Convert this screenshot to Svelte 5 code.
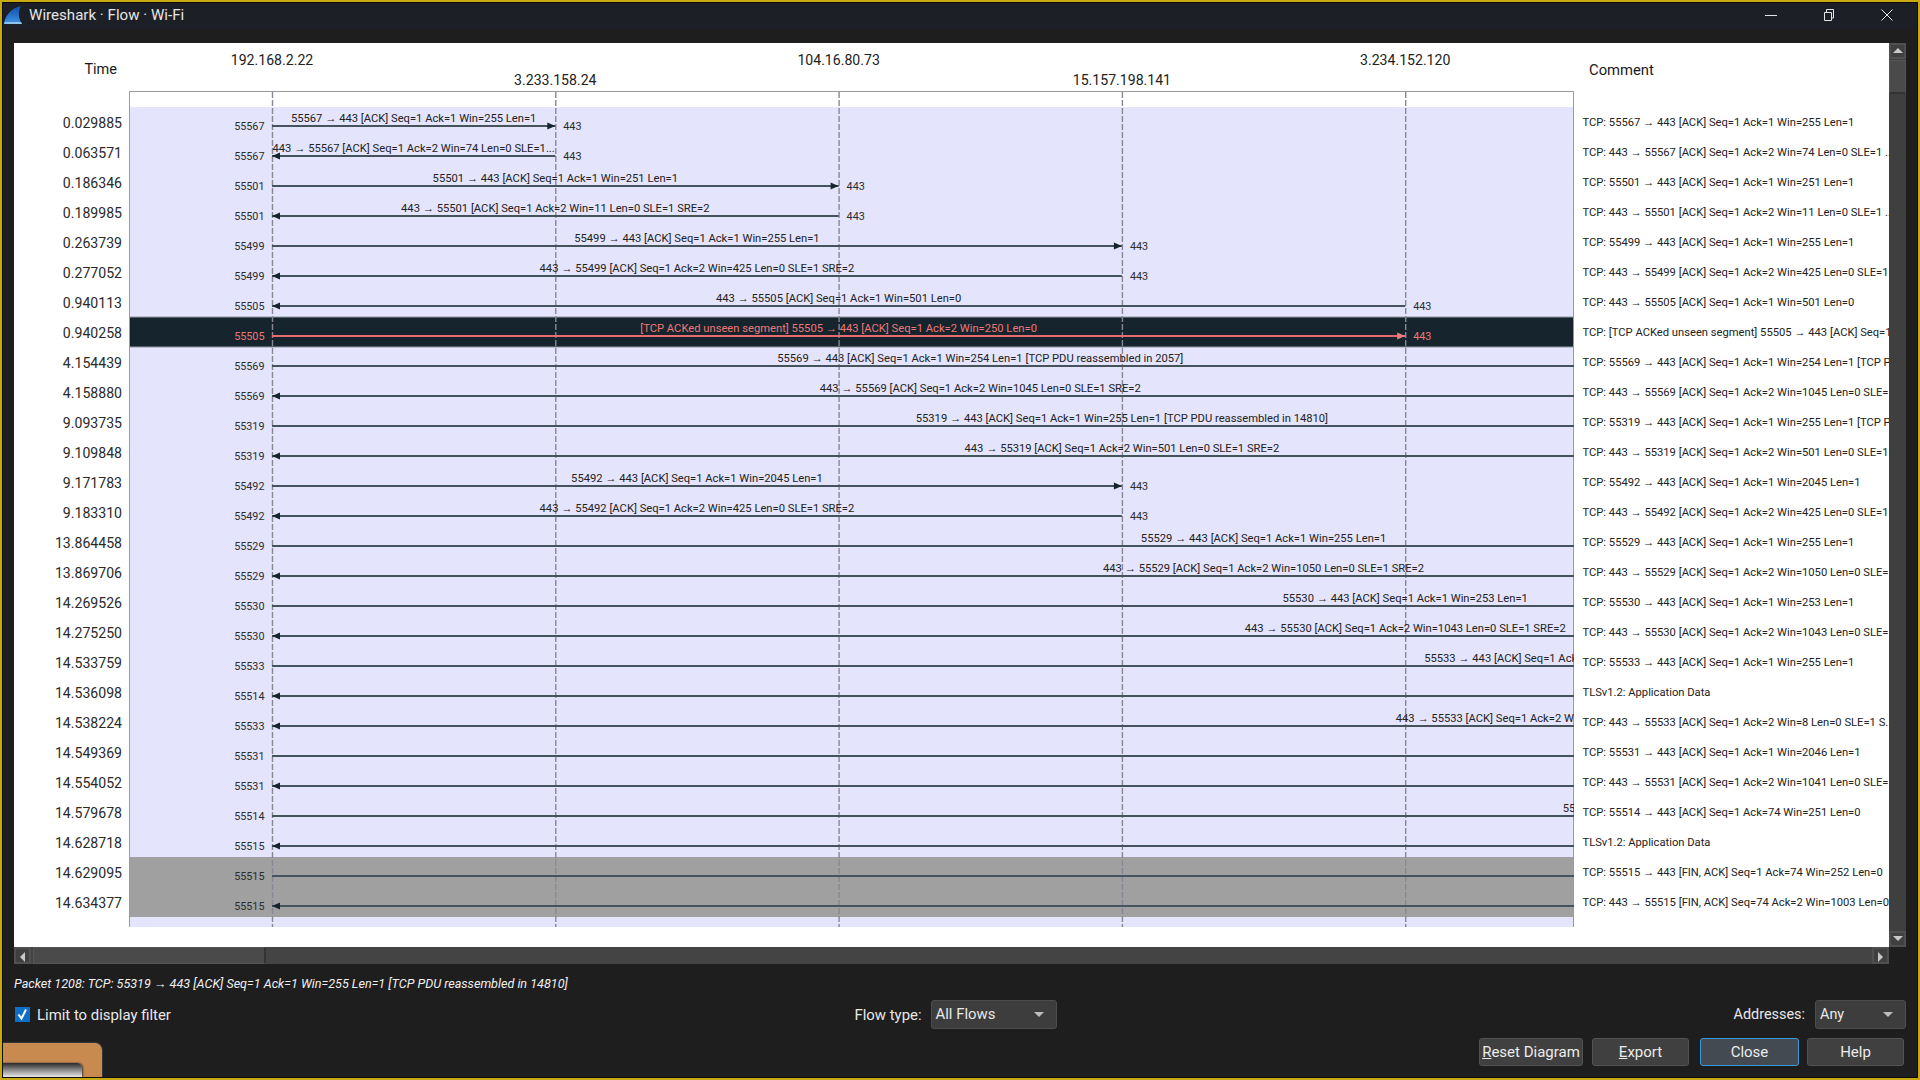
<script lang="ts">
    const laneGap = 283.3
    const laneX = (n: number) => 272 + n * laneGap
    const lanes = [0, 1, 2, 3, 4]
    const addresses = ["192.168.2.22", "3.233.158.24", "104.16.80.73", "15.157.198.141", "3.234.152.120"]

    // lane: index of the far end, can sit past the right edge of the plot
    const rows = [
        { time: "0.029885", port: 55567, lane: 1, right: true, label: "55567 → 443 [ACK] Seq=1 Ack=1 Win=255 Len=1", comment: "TCP: 55567 → 443 [ACK] Seq=1 Ack=1 Win=255 Len=1" },
        { time: "0.063571", port: 55567, lane: 1, right: false, label: "443 → 55567 [ACK] Seq=1 Ack=2 Win=74 Len=0 SLE=1...", comment: "TCP: 443 → 55567 [ACK] Seq=1 Ack=2 Win=74 Len=0 SLE=1 ..." },
        { time: "0.186346", port: 55501, lane: 2, right: true, label: "55501 → 443 [ACK] Seq=1 Ack=1 Win=251 Len=1", comment: "TCP: 55501 → 443 [ACK] Seq=1 Ack=1 Win=251 Len=1" },
        { time: "0.189985", port: 55501, lane: 2, right: false, label: "443 → 55501 [ACK] Seq=1 Ack=2 Win=11 Len=0 SLE=1 SRE=2", comment: "TCP: 443 → 55501 [ACK] Seq=1 Ack=2 Win=11 Len=0 SLE=1 ..." },
        { time: "0.263739", port: 55499, lane: 3, right: true, label: "55499 → 443 [ACK] Seq=1 Ack=1 Win=255 Len=1", comment: "TCP: 55499 → 443 [ACK] Seq=1 Ack=1 Win=255 Len=1" },
        { time: "0.277052", port: 55499, lane: 3, right: false, label: "443 → 55499 [ACK] Seq=1 Ack=2 Win=425 Len=0 SLE=1 SRE=2", comment: "TCP: 443 → 55499 [ACK] Seq=1 Ack=2 Win=425 Len=0 SLE=1..." },
        { time: "0.940113", port: 55505, lane: 4, right: false, label: "443 → 55505 [ACK] Seq=1 Ack=1 Win=501 Len=0", comment: "TCP: 443 → 55505 [ACK] Seq=1 Ack=1 Win=501 Len=0" },
        { time: "0.940258", port: 55505, lane: 4, right: true, kind: "selected", label: "[TCP ACKed unseen segment] 55505 → 443 [ACK] Seq=1 Ack=2 Win=250 Len=0", comment: "TCP: [TCP ACKed unseen segment] 55505 → 443 [ACK] Seq=1 ..." },
        { time: "4.154439", port: 55569, lane: 5, right: true, label: "55569 → 443 [ACK] Seq=1 Ack=1 Win=254 Len=1 [TCP PDU reassembled in 2057]", comment: "TCP: 55569 → 443 [ACK] Seq=1 Ack=1 Win=254 Len=1 [TCP PDU..." },
        { time: "4.158880", port: 55569, lane: 5, right: false, label: "443 → 55569 [ACK] Seq=1 Ack=2 Win=1045 Len=0 SLE=1 SRE=2", comment: "TCP: 443 → 55569 [ACK] Seq=1 Ack=2 Win=1045 Len=0 SLE=..." },
        { time: "9.093735", port: 55319, lane: 6, right: true, label: "55319 → 443 [ACK] Seq=1 Ack=1 Win=255 Len=1 [TCP PDU reassembled in 14810]", comment: "TCP: 55319 → 443 [ACK] Seq=1 Ack=1 Win=255 Len=1 [TCP PDU..." },
        { time: "9.109848", port: 55319, lane: 6, right: false, label: "443 → 55319 [ACK] Seq=1 Ack=2 Win=501 Len=0 SLE=1 SRE=2", comment: "TCP: 443 → 55319 [ACK] Seq=1 Ack=2 Win=501 Len=0 SLE=1..." },
        { time: "9.171783", port: 55492, lane: 3, right: true, label: "55492 → 443 [ACK] Seq=1 Ack=1 Win=2045 Len=1", comment: "TCP: 55492 → 443 [ACK] Seq=1 Ack=1 Win=2045 Len=1" },
        { time: "9.183310", port: 55492, lane: 3, right: false, label: "443 → 55492 [ACK] Seq=1 Ack=2 Win=425 Len=0 SLE=1 SRE=2", comment: "TCP: 443 → 55492 [ACK] Seq=1 Ack=2 Win=425 Len=0 SLE=1..." },
        { time: "13.864458", port: 55529, lane: 7, right: true, label: "55529 → 443 [ACK] Seq=1 Ack=1 Win=255 Len=1", comment: "TCP: 55529 → 443 [ACK] Seq=1 Ack=1 Win=255 Len=1" },
        { time: "13.869706", port: 55529, lane: 7, right: false, label: "443 → 55529 [ACK] Seq=1 Ack=2 Win=1050 Len=0 SLE=1 SRE=2", comment: "TCP: 443 → 55529 [ACK] Seq=1 Ack=2 Win=1050 Len=0 SLE=..." },
        { time: "14.269526", port: 55530, lane: 8, right: true, label: "55530 → 443 [ACK] Seq=1 Ack=1 Win=253 Len=1", comment: "TCP: 55530 → 443 [ACK] Seq=1 Ack=1 Win=253 Len=1" },
        { time: "14.275250", port: 55530, lane: 8, right: false, label: "443 → 55530 [ACK] Seq=1 Ack=2 Win=1043 Len=0 SLE=1 SRE=2", comment: "TCP: 443 → 55530 [ACK] Seq=1 Ack=2 Win=1043 Len=0 SLE=..." },
        { time: "14.533759", port: 55533, lane: 9, right: true, label: "55533 → 443 [ACK] Seq=1 Ack=1 Win=255 Len=1", comment: "TCP: 55533 → 443 [ACK] Seq=1 Ack=1 Win=255 Len=1" },
        { time: "14.536098", port: 55514, lane: 12, right: false, label: "", comment: "TLSv1.2: Application Data" },
        { time: "14.538224", port: 55533, lane: 9, right: false, label: "443 → 55533 [ACK] Seq=1 Ack=2 Win=8 Len=0 SLE=1 SRE=2", comment: "TCP: 443 → 55533 [ACK] Seq=1 Ack=2 Win=8 Len=0 SLE=1 S..." },
        { time: "14.549369", port: 55531, lane: 11, right: true, label: "", comment: "TCP: 55531 → 443 [ACK] Seq=1 Ack=1 Win=2046 Len=1" },
        { time: "14.554052", port: 55531, lane: 11, right: false, label: "", comment: "TCP: 443 → 55531 [ACK] Seq=1 Ack=2 Win=1041 Len=0 SLE=..." },
        { time: "14.579678", port: 55514, lane: 10, right: true, label: "55514 → 443 [ACK] Seq=1 Ack=74 Win=251 Len=0", comment: "TCP: 55514 → 443 [ACK] Seq=1 Ack=74 Win=251 Len=0" },
        { time: "14.628718", port: 55515, lane: 12, right: false, label: "", comment: "TLSv1.2: Application Data" },
        { time: "14.629095", port: 55515, lane: 12, right: true, kind: "muted", label: "", comment: "TCP: 55515 → 443 [FIN, ACK] Seq=1 Ack=74 Win=252 Len=0" },
        { time: "14.634377", port: 55515, lane: 12, right: false, kind: "muted", label: "", comment: "TCP: 443 → 55515 [FIN, ACK] Seq=74 Ack=2 Win=1003 Len=0" }
    ]

    const rowTop = (i: number) => 107 + i * 30
    const lineY = (i: number) => 126 + i * 30
</script>

<div class="window">
    <header class="titlebar">
        <svg class="fin" viewBox="0 0 20 20" width="20" height="20" aria-hidden="true">
            <defs>
                <linearGradient id="finFill" x1="0" y1="0" x2="0" y2="1">
                    <stop offset="0" stop-color="#0d4fa8"></stop>
                    <stop offset="1" stop-color="#3f93e6"></stop>
                </linearGradient>
            </defs>
            <path d="M1 19C2 11 8 3 18 1C15 6 15 13 19 19Z" fill="url(#finFill)"></path>
            <path d="M1 19H19L18 17H2Z" fill="#8cc4ee"></path>
        </svg>
        <span class="title">Wireshark · Flow · Wi-Fi</span>
        <div class="controls">
            <svg viewBox="0 0 12 12" width="12" height="12" aria-label="Minimize"><path d="M0 6.5H12" stroke="#e4e4e4" fill="none"></path></svg>
            <svg viewBox="0 0 12 12" width="12" height="12" aria-label="Restore"><path d="M1.5 3.5H8.5V11.5H1.5ZM3.5 3.5V.5H10.5V9H8.5" stroke="#e4e4e4" fill="none"></path></svg>
            <svg viewBox="0 0 12 12" width="12" height="12" aria-label="Close"><path d="M.5.5L11.5 11.5M11.5.5L.5 11.5" stroke="#e4e4e4" fill="none"></path></svg>
        </div>
    </header>

    <main class="content">
        <div class="view">
            <div class="panel">
                <div class="time-col">
                    <div class="col-title time-title">Time</div>
                    {#each rows as row}
                        <div class="time">{row.time}</div>
                    {/each}
                </div>

                <svg class="plot" viewBox="129 43 1445 904" width="1445" height="904">
                    {#each addresses as address, i}
                        <text class="address" x={laneX(i)} y={i % 2 ? 85 : 65}>{address}</text>
                    {/each}

                    <rect x="129" y="107" width="1445" height="820" fill="#e4e4fc"></rect>
                    {#each rows as row, i}
                        {#if row.kind === "selected"}
                            <rect x="129" y={rowTop(i)} width="1445" height="30" fill="#16252d" stroke="#8f9aa3"></rect>
                        {:else if row.kind === "muted"}
                            <rect x="129" y={rowTop(i)} width="1445" height="30" fill="#a0a0a0"></rect>
                        {/if}
                    {/each}
                    <path d="M129.5 927V91.5H1573.5V927" fill="none" stroke="#9a9a9a"></path>

                    {#each lanes as lane}
                        <line class="lane" x1={laneX(lane) + .5} x2={laneX(lane) + .5} y1="92" y2="927"></line>
                    {/each}

                    {#each rows as row, i}
                        {@const y = lineY(i)}
                        {@const end = laneX(row.lane)}
                        <g class:selected={row.kind === "selected"}>
                            <line class="flow" x1="272" x2={end} y1={y} y2={y}></line>
                            {#if row.right}
                                <path class="head" d="M{end} {y}l-8 -3.5v7z"></path>
                            {:else}
                                <path class="head" d="M272 {y}l8 -3.5v7z"></path>
                            {/if}
                            <text class="port" x="264.5" y={y + 4}>{row.port}</text>
                            <text class="port dst" x={end + 8} y={y + 4}>443</text>
                            <text class="label" x={(272 + end) / 2} y={y - 4}>{row.label}</text>
                        </g>
                    {/each}
                </svg>

                <div class="comment-col">
                    <div class="col-title comment-title">Comment</div>
                    {#each rows as row}
                        <div class="comment">{row.comment}</div>
                    {/each}
                </div>
            </div>

            <div class="vscroll">
                <div class="sb-btn up"></div>
                <div class="v-thumb"></div>
                <div class="v-track"></div>
                <div class="sb-btn down"></div>
            </div>

            <div class="hscroll">
                <div class="sb-btn left"></div>
                <div class="h-thumb"></div>
                <div class="h-track"></div>
                <div class="sb-btn right"></div>
            </div>
        </div>

        <p class="hint">Packet 1208: TCP: 55319 → 443 [ACK] Seq=1 Ack=1 Win=255 Len=1 [TCP PDU reassembled in 14810]</p>

        <div class="options">
            <label class="check">
                <span class="box">
                    <svg viewBox="0 0 15 15" width="15" height="15"><path d="M3.5 7.5L6.5 11.5L11 2.5" stroke="#fff" stroke-width="2" fill="none"></path></svg>
                </span>
                Limit to display filter
            </label>
            <div class="flow-type">
                <span>Flow type:</span>
                <div class="combo wide">All Flows</div>
            </div>
            <div class="addr">
                <span>Addresses:</span>
                <div class="combo narrow">Any</div>
            </div>
        </div>

        <div class="buttons">
            <button type="button" class="reset"><u>R</u>eset Diagram</button>
            <button type="button" class="export"><u>E</u>xport</button>
            <button type="button" class="close">Close</button>
            <button type="button" class="help">Help</button>
        </div>
    </main>

    <div class="overlay">
        <div class="overlay-inner"></div>
    </div>
</div>

<style>
    :global(body) {
        margin: 0;
        background: #1e1e1e;
    }

    .window {
        position: relative;
        box-sizing: border-box;
        display: flex;
        flex-direction: column;
        width: 1920px;
        height: 1080px;
        overflow: hidden;
        border: 2px solid #c8a90f;
        background: #1e1e1e;
        color: #e8e8e8;
        font-family: Roboto, "Noto Sans", sans-serif;
    }

    .window::after {
        content: "";
        position: absolute;
        inset: 0;
        border: 1px solid #0c0c0c;
        pointer-events: none;
    }

    .titlebar {
        flex: none;
        box-sizing: border-box;
        display: flex;
        align-items: center;
        height: 27px;
        padding: 0 0 2px 1px;
        background: #1c1f25;
    }

    .fin {
        margin-right: 6px;
    }

    .title {
        font-size: 15.1px;
        color: #e6e6e6;
    }

    .controls {
        display: flex;
        gap: 46px;
        margin-left: auto;
        margin-right: 25px;
    }

    .content {
        flex: 1;
        display: flex;
        flex-direction: column;
        padding: 14px 12px 0;
    }

    .view {
        display: grid;
        grid-template-columns: 1875px 17px;
        grid-template-rows: 904px 17px;
    }

    .panel {
        display: flex;
        background: #fff;
        color: #1a1a1a;
        overflow: hidden;
    }

    .time-col {
        flex: none;
        width: 115px;
    }

    .col-title {
        height: 64px;
        line-height: 54px;
        font-size: 14.5px;
    }

    .time-title {
        padding-right: 12px;
        text-align: right;
    }

    .time {
        height: 30px;
        line-height: 33px;
        padding-right: 7px;
        text-align: right;
        font-size: 14.1px;
        color: #2a2a2a;
    }

    .plot {
        flex: none;
        display: block;
    }

    .plot text {
        font-family: Roboto, "Noto Sans", sans-serif;
    }

    .address {
        font-size: 14.1px;
        text-anchor: middle;
        fill: #222;
    }

    .lane {
        stroke: #888894;
        stroke-width: 1.4;
        stroke-dasharray: 6 2;
    }

    .flow {
        stroke: #45535d;
        stroke-width: 1.8;
    }

    .head {
        fill: #16252d;
    }

    .port {
        font-size: 10.8px;
        text-anchor: end;
        fill: #2c2c2c;
    }

    .port.dst {
        text-anchor: start;
    }

    .label {
        font-size: 11.2px;
        text-anchor: middle;
        fill: #222;
    }

    .selected .flow {
        stroke: #e56b6f;
    }

    .selected .head {
        fill: #f07c7c;
    }

    .selected text {
        fill: #ee7777;
    }

    .comment-col {
        flex: 1;
        min-width: 0;
    }

    .comment-title {
        padding-left: 15px;
        font-size: 14.8px;
    }

    .comment {
        position: relative;
        top: 1px;
        height: 30px;
        line-height: 30px;
        padding-left: 8.5px;
        white-space: nowrap;
        overflow: hidden;
        font-size: 11.2px;
        color: #222;
    }

    .vscroll {
        display: flex;
        flex-direction: column;
        background: #3f3f3f;
    }

    .hscroll {
        display: flex;
        background: #444;
        grid-column: 1;
    }

    .sb-btn {
        flex: none;
        position: relative;
        box-sizing: border-box;
        width: 17px;
        height: 16px;
        background: #404040;
        border: 2px solid #505050;
    }

    .sb-btn::after {
        content: "";
        position: absolute;
        left: 1.5px;
        top: 3px;
        border-style: solid;
        border-color: transparent;
    }

    .sb-btn.up::after {
        border-width: 0 5px 5px;
        border-bottom-color: #c8c8c8;
    }

    .sb-btn.down::after {
        border-width: 5px 5px 0;
        border-top-color: #c8c8c8;
    }

    .sb-btn.left,
    .sb-btn.right {
        height: 17px;
    }

    .sb-btn.left::after {
        left: 4px;
        top: 2.5px;
        border-width: 5px 5px 5px 0;
        border-right-color: #c8c8c8;
    }

    .sb-btn.right::after {
        left: 4px;
        top: 2.5px;
        border-width: 5px 0 5px 5px;
        border-left-color: #c8c8c8;
    }

    .v-thumb {
        flex: none;
        box-sizing: border-box;
        height: 34px;
        margin-top: 1px;
        background: #4a4a4a;
        border: 1px solid #555;
        border-bottom: 2px solid #333;
    }

    .v-track {
        flex: 1;
    }

    .h-thumb {
        flex: none;
        box-sizing: border-box;
        width: 233px;
        margin-left: 2px;
        background: #4a4a4a;
        border: 1px solid #555;
        border-right: 2px solid #333;
    }

    .h-track {
        flex: 1;
    }

    .hint {
        margin: 0;
        height: 36px;
        line-height: 40px;
        font-size: 12.6px;
        font-style: italic;
        color: #f0f0f0;
    }

    .options {
        display: grid;
        grid-template-columns: 1fr auto 1fr;
        align-items: center;
        height: 29px;
        font-size: 14.9px;
    }

    .check {
        display: flex;
        align-items: center;
        gap: 7px;
        margin-left: 1px;
    }

    .box {
        display: block;
        width: 15px;
        height: 15px;
        background: #0f6fc6;
    }

    .box svg {
        display: block;
    }

    .flow-type {
        display: flex;
        align-items: center;
        gap: 9px;
        margin-right: 9px;
    }

    .addr {
        display: flex;
        align-items: center;
        justify-content: flex-end;
        gap: 10px;
        font-size: 14.4px;
    }

    .combo {
        position: relative;
        box-sizing: border-box;
        height: 29px;
        line-height: 27px;
        padding-left: 4px;
        background: #3d3d3d;
        border: 1px solid #4d4d4d;
        border-radius: 3px;
    }

    .combo::after {
        content: "";
        position: absolute;
        right: 12px;
        top: 11px;
        border-style: solid;
        border-color: transparent;
        border-width: 5px 5px 0;
        border-top-color: #bdbdbd;
    }

    .combo.wide {
        width: 126px;
    }

    .combo.narrow {
        width: 91px;
    }

    .buttons {
        display: flex;
        justify-content: flex-end;
        gap: 8px;
        margin-top: 9px;
        padding-right: 2px;
    }

    button {
        box-sizing: border-box;
        height: 28px;
        padding: 0;
        background: #404040;
        border: 1px solid #525252;
        border-radius: 3px;
        color: #ececec;
        font-family: inherit;
        font-size: 15px;
    }

    .reset { width: 104px; margin-right: 1px; }
    .export { width: 97px; margin-right: 3px; }
    .close { width: 99px; background: #434a52; border-color: #3a9be0; }
    .help { width: 97px; }

    .overlay {
        position: absolute;
        left: 0;
        bottom: 1px;
        box-sizing: border-box;
        width: 101px;
        height: 35px;
        background: #c98a50;
        border: solid #33373c;
        border-width: 1px 1px 0 0;
        border-radius: 0 8px 0 0;
        overflow: hidden;
    }

    .overlay-inner {
        position: absolute;
        left: 0;
        bottom: 0;
        width: 80px;
        height: 14px;
        border-radius: 0 5px 0 0;
        background: linear-gradient(to bottom, #2a2a2a, #8a8a8a 50%, #e8e8e8);
        box-shadow: 1px 0 2px #3a3a3a;
    }
</style>
